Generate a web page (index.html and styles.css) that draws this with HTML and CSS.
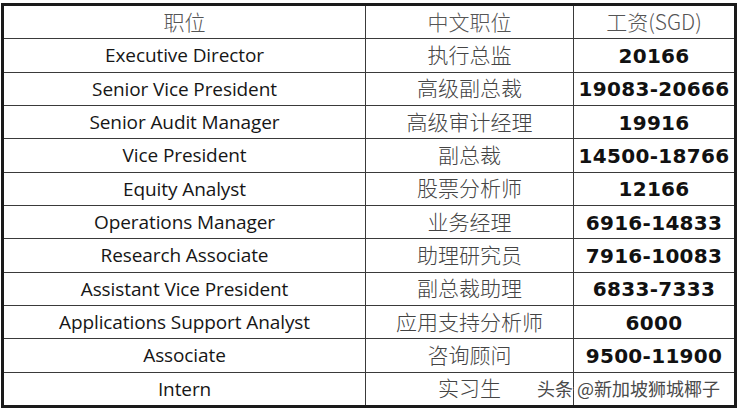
FILE: index.html
```html
<!DOCTYPE html>
<html lang="zh">
<head>
<meta charset="utf-8">
<link rel="stylesheet" href="styles.css">
</head>
<body>
<div class="page">
  <div class="sheet">
    <div class="cell head">职位</div>
    <div class="cell head">中文职位</div>
    <div class="cell head">工资(SGD)</div>

    <div class="cell en">Executive Director</div>
    <div class="cell zh">执行总监</div>
    <div class="cell num">20166</div>

    <div class="cell en">Senior Vice President</div>
    <div class="cell zh">高级副总裁</div>
    <div class="cell num">19083-20666</div>

    <div class="cell en">Senior Audit Manager</div>
    <div class="cell zh">高级审计经理</div>
    <div class="cell num">19916</div>

    <div class="cell en">Vice President</div>
    <div class="cell zh">副总裁</div>
    <div class="cell num">14500-18766</div>

    <div class="cell en">Equity Analyst</div>
    <div class="cell zh">股票分析师</div>
    <div class="cell num">12166</div>

    <div class="cell en">Operations Manager</div>
    <div class="cell zh">业务经理</div>
    <div class="cell num">6916-14833</div>

    <div class="cell en">Research Associate</div>
    <div class="cell zh">助理研究员</div>
    <div class="cell num">7916-10083</div>

    <div class="cell en">Assistant Vice President</div>
    <div class="cell zh">副总裁助理</div>
    <div class="cell num">6833-7333</div>

    <div class="cell en">Applications Support Analyst</div>
    <div class="cell zh">应用支持分析师</div>
    <div class="cell num">6000</div>

    <div class="cell en">Associate</div>
    <div class="cell zh">咨询顾问</div>
    <div class="cell num">9500-11900</div>

    <div class="cell en">Intern</div>
    <div class="cell zh">实习生</div>
    <div class="cell num"></div>
  </div>
  <div class="watermark">头条 @新加坡狮城椰子</div>
</div>
</body>
</html>
```

FILE: styles.css
```css
html, body {
  margin: 0;
  padding: 0;
  background: #ffffff;
}

.page {
  position: relative;
  width: 740px;
  height: 412px;
  padding: 3px 0 0 1px;
  box-sizing: border-box;
}

.sheet {
  width: 736px;
  height: 405px;
  box-sizing: border-box;
  border: 3px solid #1a1a1a;
  background: #3a3a3a;
  display: grid;
  grid-template-columns: 361px 207px 160px;
  grid-template-rows: repeat(12, 1fr);
  gap: 1px;
}

.cell {
  background: #ffffff;
  display: flex;
  align-items: center;
  justify-content: center;
  white-space: nowrap;
  overflow: hidden;
}

.en {
  font-family: "Open Sans", "Noto Sans CJK SC", sans-serif;
  font-size: 19px;
  letter-spacing: -0.1px;
  color: #161616;
}

.zh {
  font-family: "Noto Sans CJK SC", "Open Sans", sans-serif;
  font-size: 21px;
  font-weight: 300;
  color: #444444;
  padding-bottom: 3px;
}

.head {
  font-family: "Noto Sans CJK SC", "Open Sans", sans-serif;
  font-size: 21px;
  font-weight: 300;
  color: #555555;
  padding-bottom: 3px;
}

.num {
  font-family: "DejaVu Sans", sans-serif;
  font-weight: bold;
  font-size: 20px;
  color: #111111;
  letter-spacing: 0.3px;
  padding-top: 1px;
}

.watermark {
  position: absolute;
  left: 537px;
  top: 376px;
  font-family: "Noto Sans CJK SC", sans-serif;
  font-size: 18px;
  line-height: 24px;
  color: #4a4a4a;
  white-space: nowrap;
  text-shadow:
    1px 1px 0 #fff, -1px -1px 0 #fff, 1px -1px 0 #fff, -1px 1px 0 #fff;
}
```
